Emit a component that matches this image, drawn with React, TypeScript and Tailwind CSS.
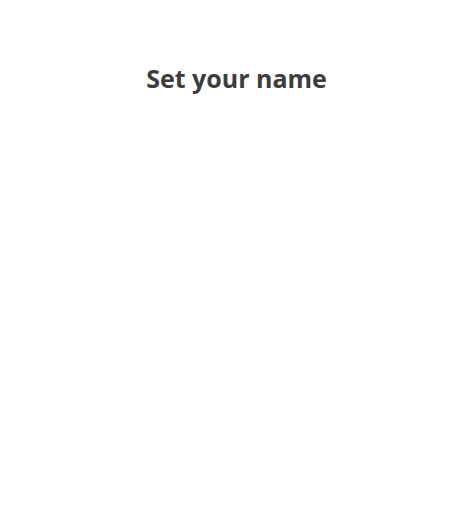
export default function App() {
  return (
    <div className="min-h-[510px] w-full bg-white flex flex-col items-center pt-[62px]">
      <h1 className="text-[25px] leading-[32px] font-bold text-[#3d3d3d]" style={{ fontFamily: '"Open Sans", "Liberation Sans", sans-serif' }}>
        Set your name
      </h1>
    </div>
  );
}
